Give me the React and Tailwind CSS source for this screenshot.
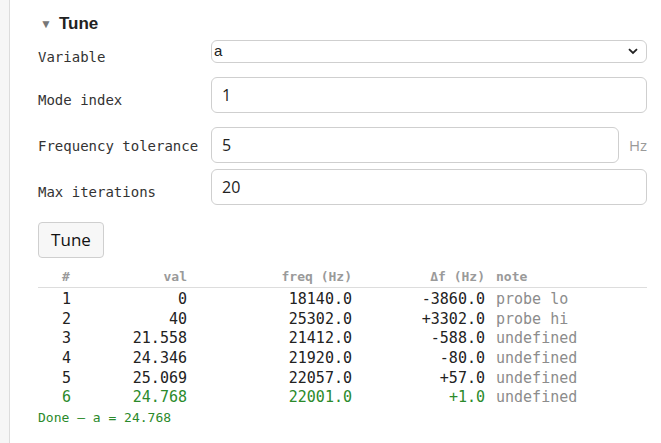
import React from 'react';

const mono = { fontFamily: '"DejaVu Sans Mono", monospace' };

const rows = [
  { n: 1, val: '0', freq: '18140.0', df: '-3860.0', note: 'probe lo' },
  { n: 2, val: '40', freq: '25302.0', df: '+3302.0', note: 'probe hi' },
  { n: 3, val: '21.558', freq: '21412.0', df: '-588.0', note: 'undefined' },
  { n: 4, val: '24.346', freq: '21920.0', df: '-80.0', note: 'undefined' },
  { n: 5, val: '25.069', freq: '22057.0', df: '+57.0', note: 'undefined' },
  { n: 6, val: '24.768', freq: '22001.0', df: '+1.0', note: 'undefined', done: true },
];

const cols = 'grid grid-cols-[60px_95px_165px_133px_1fr]';

const Field = ({ label, value, top, h, labelPad, unit }) => (
  <div className={`flex items-start ${top}`}>
    <div className={`w-[173px] shrink-0 text-[14px] text-[#333] ${labelPad}`} style={mono}>
      {label}
    </div>
    <div className={`flex-1 ${h} rounded-[6px] border border-[#cfcfcf] bg-white flex items-center pl-[10px] text-[16px] text-[#222]`}>
      {value}
    </div>
    {unit && (
      <div className="w-[28px] text-right mt-[7px] text-[15px] text-[#9a9a9a]">{unit}</div>
    )}
  </div>
);

export default function App() {
  return (
    <div className="w-[661px] h-[443px] bg-[#f6f6f6] pl-[9px] overflow-hidden" style={{ fontFamily: '"Open Sans", "Liberation Sans", sans-serif' }}>
      <div className="h-full bg-white border-l border-[#dcdcdc] pl-[28px] pr-[14px]">
        <div className="flex items-center h-[24px] pt-[12px] box-content">
          <span className="text-[12px] text-[#777] mr-[7px] ml-[2px]">▼</span>
          <span className="text-[17px] font-bold text-[#222]" style={{ fontFamily: '"Liberation Sans", Arial, sans-serif' }}>Tune</span>
        </div>
        <div className="flex items-start mt-[4px]">
          <div className="w-[173px] shrink-0 text-[14px] text-[#333] pt-[7px]" style={mono}>Variable</div>
          <div className="flex-1 h-[23px] rounded-[6px] border border-[#cfcfcf] bg-white flex items-center justify-between pl-[2px] pr-[8px] text-[15px] text-[#222]" style={{ fontFamily: '"Liberation Sans", Arial, sans-serif' }}>
            <span>a</span>
            <svg width="10" height="7" viewBox="0 0 10 7" fill="none" stroke="#222" strokeWidth="1.8">
              <path d="M1 1.2 L5 5 L9 1.2" />
            </svg>
          </div>
        </div>
        <Field label="Mode index" value="1" top="mt-[9px]" h="h-[36px]" labelPad="pt-[13px]" />
        <Field label="Frequency tolerance" value="5" top="mt-[14px]" h="h-[36px]" labelPad="pt-[9px]" unit="Hz" />
        <Field label="Max iterations" value="20" top="mt-[6px]" h="h-[36px]" labelPad="pt-[13px]" />
        <button className="mt-[17px] h-[36px] w-[66px] rounded-[4px] border border-[#cfcfcf] bg-[#f7f7f7] text-[17px] text-[#111]" style={{ fontFamily: '"Open Sans", "Liberation Sans", sans-serif' }}>
          Tune
        </button>
        <div className="mt-[8px]" style={mono}>
          <div className={`${cols} h-[22px] items-center border-b border-[#dddddd] text-[13px] font-bold text-[#9a9a9a]`}>
            <div className="pl-[24px]">#</div>
            <div className="text-right pr-[6px]">val</div>
            <div className="text-right pr-[6px]">freq (Hz)</div>
            <div className="text-right pr-[6px]">Δf (Hz)</div>
            <div className="pl-[5px]">note</div>
          </div>
          {rows.map((r) => (
            <div key={r.n} className={`${cols} h-[19.7px] items-center text-[15px] ${r.done ? 'text-[#2b8a2b]' : 'text-[#222]'}`}>
              <div className="pl-[24px]">{r.n}</div>
              <div className="text-right pr-[6px]">{r.val}</div>
              <div className="text-right pr-[6px]">{r.freq}</div>
              <div className="text-right pr-[6px]">{r.df}</div>
              <div className="pl-[5px] text-[#8c8c8c]">{r.note}</div>
            </div>
          ))}
          <div className="mt-[2px] h-[20px] flex items-center text-[13px] text-[#2b8a2b]">Done — a = 24.768</div>
        </div>
      </div>
    </div>
  );
}
